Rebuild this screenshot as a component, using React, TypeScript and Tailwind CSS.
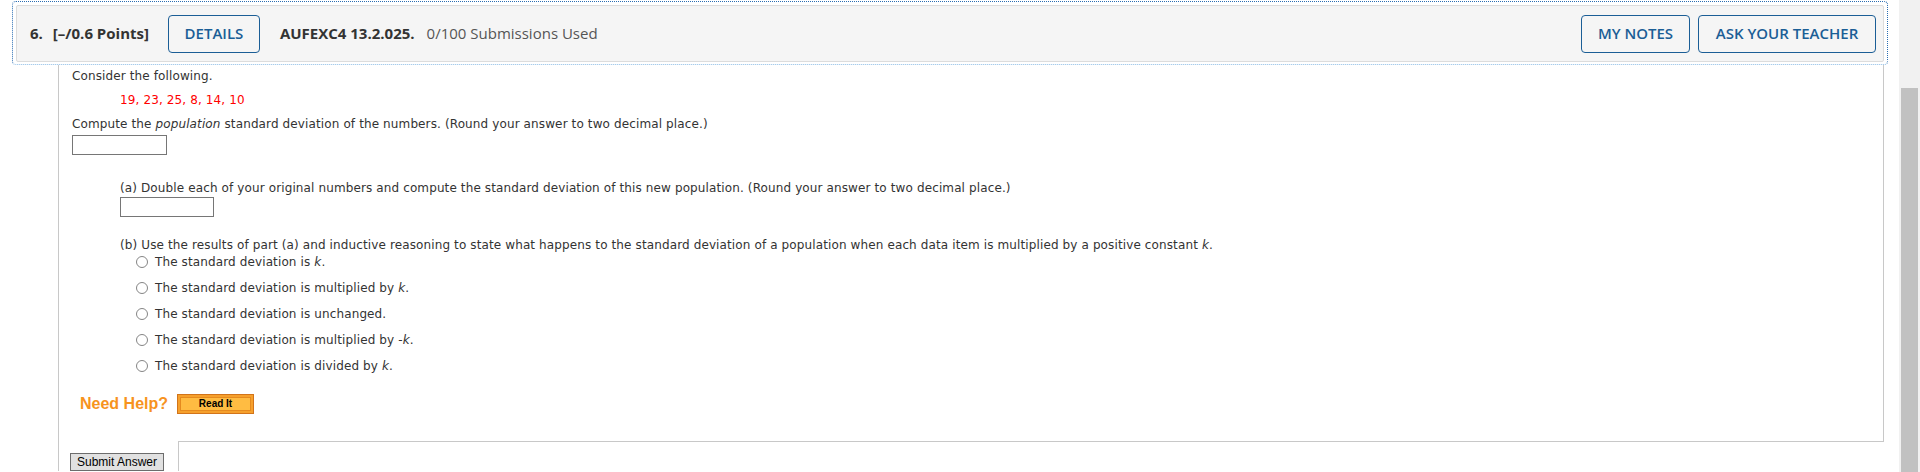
import React from 'react';

const body = "font-['DejaVu_Sans',Verdana,sans-serif] text-[12px] tracking-[0.12px] leading-[16px] text-[#333]";

const options = [
  ['The standard deviation is ', 'k', '.'],
  ['The standard deviation is multiplied by ', 'k', '.'],
  ['The standard deviation is unchanged.', '', ''],
  ['The standard deviation is multiplied by -', 'k', '.'],
  ['The standard deviation is divided by ', 'k', '.'],
];

function HeaderButton({ label, width }: { label: string; width: string }) {
  return (
    <button
      className={`${width} h-[38px] rounded-[4px] border border-[#1b5e96] bg-transparent text-[15px] font-semibold uppercase text-[#1b5e96]`}
    >
      {label}
    </button>
  );
}

export default function App() {
  return (
    <div className="flex h-[472px] w-[1920px] overflow-hidden bg-white">
      <div className="w-[1899px] shrink-0">
        {/* question header with focus ring */}
        <div className="ml-[12px] mr-[11px] mt-[1px] rounded-[4px] border border-dotted border-[#2a6db2] border-b-solid border-b-[#8dbde6] px-[3px] pb-[2px] pt-[3px]">
          <div className="flex h-[57px] items-center rounded-[2px] border border-[#dcdcdc] bg-[#f5f5f5] pl-[13px] pr-[7px] font-['Open_Sans',sans-serif]">
            <span className="text-[15px] font-bold text-[#333]">6.</span>
            <span className="ml-[10px] text-[15px] font-bold text-[#333]">[–/0.6 Points]</span>
            <div className="ml-[19px]">
              <HeaderButton label="Details" width="w-[92px]" />
            </div>
            <span className="ml-[20px] text-[15px] font-bold text-[#333]">AUFEXC4 13.2.025.</span>
            <span className="ml-[12px] text-[15px] text-[#555]">0/100 Submissions Used</span>
            <div className="ml-auto flex gap-[8px]">
              <HeaderButton label="My Notes" width="w-[109px]" />
              <HeaderButton label="Ask Your Teacher" width="w-[178px]" />
            </div>
          </div>
        </div>

        {/* question body */}
        <div className="ml-[58px] mr-[15px] border-l border-[#c8c8c8]">
          <div className={`h-[376px] border-r border-[#c8c8c8] pl-[13px] pt-[3px] ${body}`}>
            <p>Consider the following.</p>
            <p className="mt-[8px] pl-[48px] text-[#ff0000]">19, 23, 25, 8, 14, 10</p>
            <p className="mt-[8px]">
              Compute the <i>population</i> standard deviation of the numbers. (Round your answer to two decimal place.)
            </p>
            <input className="mt-[3px] block h-[20px] w-[95px] border border-[#767676] bg-white" />

            <div className="pl-[48px]">
              <p className="mt-[25px]">
                (a) Double each of your original numbers and compute the standard deviation of this new population. (Round your answer to two decimal place.)
              </p>
              <input className="mt-[1px] block h-[20px] w-[94px] border border-[#767676] bg-white" />

              <p className="mt-[20px]">
                (b) Use the results of part (a) and inductive reasoning to state what happens to the standard deviation of a population when each data item is multiplied by a positive constant <i>k</i>.
              </p>
              <div className="mt-[1px] flex flex-col gap-[10px] pl-[16px]">
                {options.map(([text, it, end]) => (
                  <label key={text + it} className="flex h-[16px] items-center">
                    <span className="h-[12px] w-[12px] shrink-0 rounded-full border border-[#858585] bg-white" />
                    <span className="ml-[7px]">
                      {text}
                      {it && <i>{it}</i>}
                      {end}
                    </span>
                  </label>
                ))}
              </div>
            </div>

            <div className="mt-[20px] flex h-[20px] items-center pl-[8px]">
              <span className="font-['Liberation_Sans',Arial,sans-serif] text-[16px] font-bold tracking-normal text-[#f7931e]">Need Help?</span>
              <button className="ml-[9px] h-[20px] w-[77px] border border-[#d2741a] bg-[#f6a02c] p-[2px]">
                <div className="flex h-full w-full items-center justify-center border border-[#e58a1f] bg-[#ffbc42] font-['Liberation_Sans',Arial,sans-serif] text-[10px] font-bold leading-none tracking-normal text-black">
                  Read It
                </div>
              </button>
            </div>
          </div>

          <div className="flex">
            <div className="w-[119px] shrink-0 pl-[11px] pt-[12px]">
              <button className="flex h-[18px] w-[94px] items-center justify-center border border-[#6d6d6d] bg-[#e1e1e1] font-['Liberation_Sans',Arial,sans-serif] text-[12px] leading-[14px] text-black">
                Submit Answer
              </button>
            </div>
            <div className="h-[30px] flex-1 border-l border-t border-[#c8c8c8]" />
          </div>
        </div>
      </div>

      {/* browser scrollbar */}
      <div className="flex w-[21px] flex-col bg-[#f1f1f1] pl-[2px] pr-[2px] pt-[88px]">
        <div className="flex-1 bg-[#c1c1c1]" />
      </div>
    </div>
  );
}
